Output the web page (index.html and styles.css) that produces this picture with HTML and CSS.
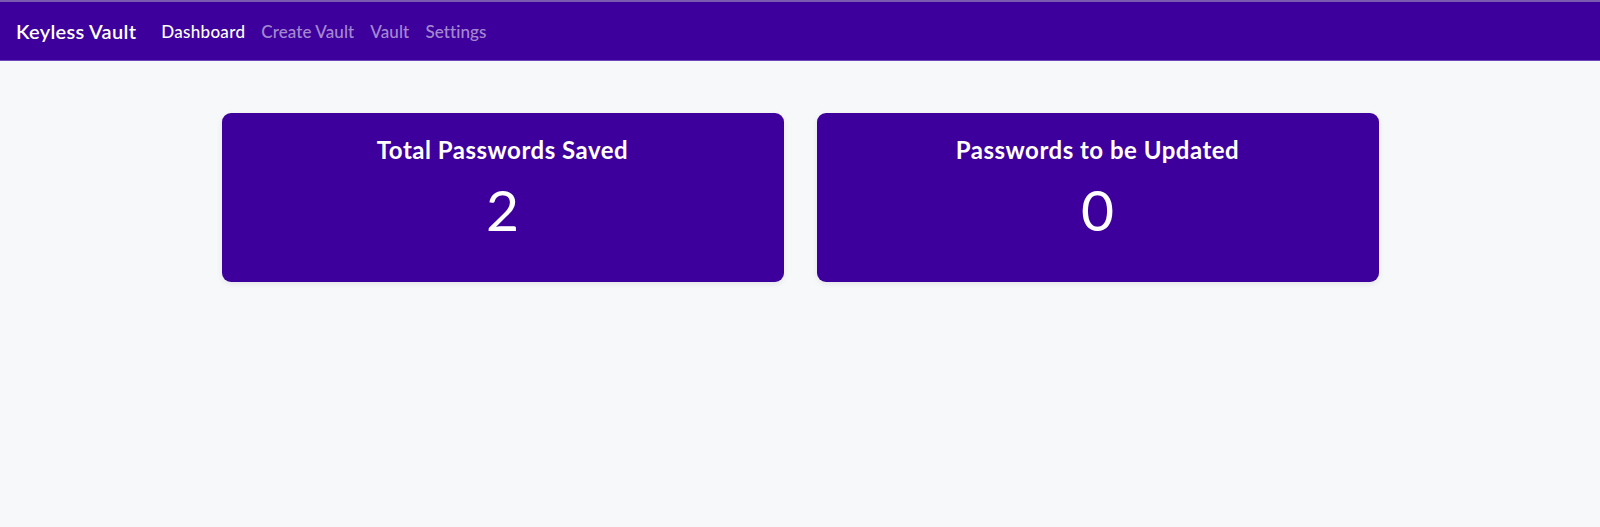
FILE: index.html
```html
<!DOCTYPE html>
<html lang="en">
<head>
<meta charset="utf-8">
<title>Keyless Vault</title>
<link rel="stylesheet" href="styles.css">
</head>
<body>
<header class="navbar">
  <a class="brand" href="#">Keyless Vault</a>
  <nav class="nav">
    <a class="nav-link active" href="#">Dashboard</a>
    <a class="nav-link" href="#">Create Vault</a>
    <a class="nav-link" href="#">Vault</a>
    <a class="nav-link" href="#">Settings</a>
  </nav>
</header>
<main class="content">
  <div class="cards">
    <section class="card">
      <h2 class="card-title">Total Passwords Saved</h2>
      <div class="card-value">2</div>
    </section>
    <section class="card">
      <h2 class="card-title">Passwords to be Updated</h2>
      <div class="card-value">0</div>
    </section>
  </div>
</main>
</body>
</html>
```
FILE: styles.css
```css
* { box-sizing: border-box; }
html, body { margin: 0; height: 100%; }
body {
  background: #f7f8fa;
  font-family: "Lato", "Inter", "Noto Sans", sans-serif;
  color: #fff;
}
.navbar {
  height: 61px;
  background: #3d009c;
  border-top: 2px solid #7b5bb0;
  border-bottom: 1px solid #6a4ab8;
  display: flex;
  align-items: center;
  padding: 0 16px;
}
.brand {
  color: #fff;
  text-decoration: none;
  font-size: 20px;
  font-weight: 600;
  letter-spacing: 0.3px;
  margin-right: 25px;
}
.nav { display: flex; gap: 16px; }
.nav-link {
  color: rgba(255,255,255,0.55);
  text-decoration: none;
  font-size: 17px;
  font-weight: 500;
  letter-spacing: 0.3px;
}
.nav-link + .nav-link { letter-spacing: 0.1px; }
.nav-link.active { color: #fff; }
.content { padding-top: 52px; }
.cards {
  max-width: 1157px;
  margin: 0 auto;
  display: grid;
  grid-template-columns: 1fr 1fr;
  gap: 33px;
}
.card {
  background: #3d009c;
  border-radius: 9px;
  height: 169px;
  box-shadow: 0 2px 6px rgba(0,0,0,0.08);
  display: flex;
  flex-direction: column;
  align-items: center;
  padding-top: 20px;
}
.card-title {
  margin: 0;
  font-size: 24px;
  font-weight: 700;
  letter-spacing: 0.5px;
  line-height: 34px;
}
.card-value {
  margin-top: 9px;
  font-size: 57px;
  font-weight: 400;
  line-height: 66px;
}
```
